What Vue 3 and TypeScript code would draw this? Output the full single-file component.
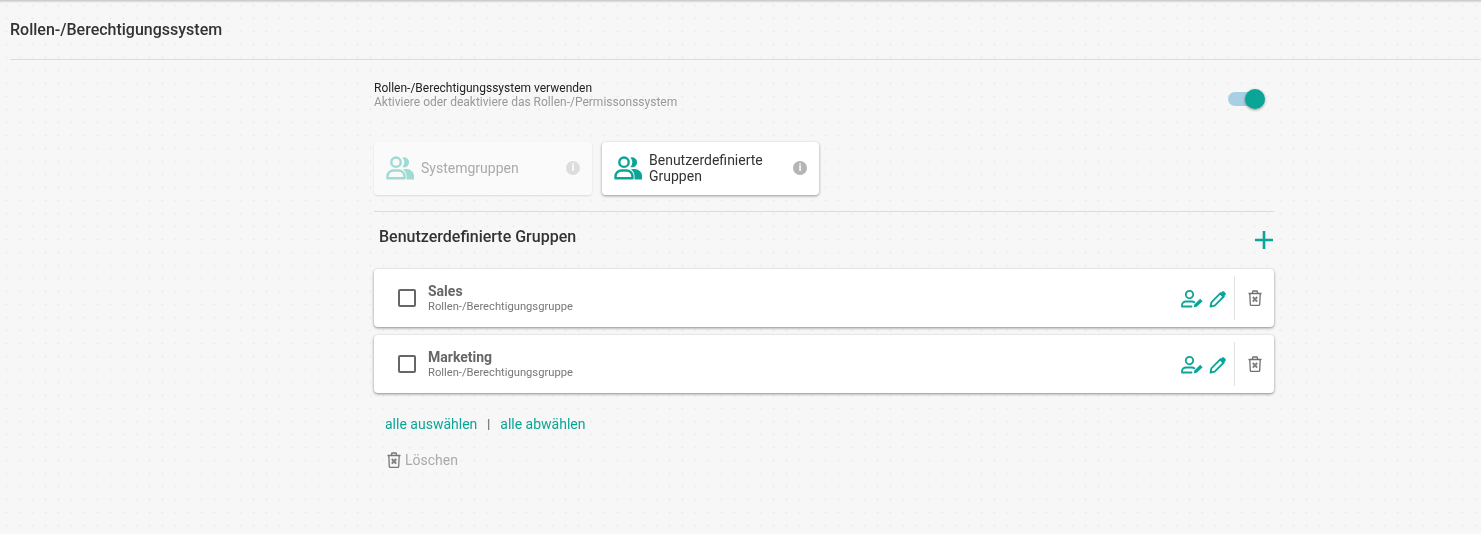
<template>
  <div class="page">
    <header class="kopf">
      <h1>Rollen-/Berechtigungssystem</h1>
    </header>

    <main class="inhalt">
      <section class="schalter-zeile">
        <div>
          <div class="schalter-titel">Rollen-/Berechtigungssystem verwenden</div>
          <div class="schalter-text">Aktiviere oder deaktiviere das Rollen-/Permissonssystem</div>
        </div>
        <div class="toggle"><span class="thumb"></span></div>
      </section>

      <div class="tabs">
        <div v-for="tab in tabs" :key="tab.label" class="tab" :class="{ aktiv: tab.aktiv }">
          <svg class="tab-icon" viewBox="0 0 28 24" fill="none">
            <circle cx="10" cy="6.200" r="4.700" stroke="currentColor" stroke-width="2.400" />
            <path d="M16.400 1.600a5 5 0 1 1 0 9.400a7.400 7.400 0 0 0 0-9.400z" fill="currentColor" />
            <path d="M1.500 22.300v-1.800c0-3.600 2.800-6 6-6h5c3.200 0 6 2.400 6 6v1.800z" stroke="currentColor" stroke-width="2.400" stroke-linejoin="round" />
            <path d="M17 13h3.500c4 0 7.500 3 7.500 6.500v4h-7.500v-3.500c0-2.700-1.500-5-3.500-7z" fill="currentColor" />
          </svg>
          <span class="tab-label">{{ tab.label }}</span>
          <span class="info">i</span>
        </div>
      </div>

      <div class="titel-zeile">
        <h2>Benutzerdefinierte Gruppen</h2>
        <svg class="plus" viewBox="0 0 18 18"><path d="M9 0v18M0 9h18" stroke="#0aa596" stroke-width="2.600" /></svg>
      </div>

      <div class="liste">
        <div v-for="gruppe in gruppen" :key="gruppe" class="karte">
          <span class="checkbox"></span>
          <div class="karte-text">
            <div class="karte-name">{{ gruppe }}</div>
            <div class="karte-typ">Rollen-/Berechtigungsgruppe</div>
          </div>
          <div class="aktionen">
            <svg class="icon-user" viewBox="0 0 22 18" fill="none" stroke="#0aa596" stroke-width="1.800">
              <circle cx="8.500" cy="4.600" r="3.700" />
              <path d="M1 16.500v-1.200c0-2.400 2-3.800 4-3.800h6c1 0 1.800.3 2.400.7M1 16.500h9.500" stroke-linecap="round" />
              <path d="M12.800 17.200l.6-2.700l5.800-5.700l2.400 2.400l-5.800 5.500z" fill="#0aa596" stroke="none" />
            </svg>
            <svg class="icon-stift" viewBox="0 0 18 18" fill="none">
              <path d="M1.500 16.500l.9-4.200L11.500 3.200l3.300 3.300l-9.100 9.100z" stroke="#0aa596" stroke-width="1.800" stroke-linejoin="round" />
              <path d="M10.500 4.200l2.700-2.700c.5-.5 1.300-.5 1.800 0l1.500 1.500c.5.500.5 1.300 0 1.800l-2.700 2.700z" fill="#0aa596" />
            </svg>
          </div>
          <div class="trenner"></div>
          <svg class="icon-tonne" viewBox="0 0 14 16" fill="none">
            <path d="M.5 3.500h13M4.300 3.200L5 1h4l.7 2.200" stroke="#707070" stroke-width="1.300" />
            <path d="M1.800 3.500l.5 10.900c0 .6.400 .9 1 .9h7.400c.6 0 1-.3 1-.9l.5-10.900" stroke="#707070" stroke-width="1.300" />
            <path d="M4.800 7l4.400 4.600M9.200 7l-4.400 4.600" stroke="#808080" stroke-width="2" />
          </svg>
        </div>
      </div>

      <div class="auswahl">
        <a>alle auswählen</a>
        <span class="strich">|</span>
        <a>alle abwählen</a>
      </div>

      <div class="loeschen">
        <svg class="icon-tonne" viewBox="0 0 14 16" fill="none">
          <path d="M.5 3.500h13M4.300 3.200L5 1h4l.7 2.200" stroke="#777" stroke-width="1.300" />
          <path d="M1.800 3.500l.5 10.900c0 .6.400 .9 1 .9h7.400c.6 0 1-.3 1-.9l.5-10.900" stroke="#777" stroke-width="1.300" />
          <path d="M4.800 7l4.400 4.600M9.200 7l-4.400 4.600" stroke="#808080" stroke-width="2" />
        </svg>
        <span>Löschen</span>
      </div>
    </main>
  </div>
</template>

<script setup lang="ts">
interface Tab {
  label: string;
  aktiv: boolean;
}

const tabs: Tab[] = [
  { label: 'Systemgruppen', aktiv: false },
  { label: 'Benutzerdefinierte Gruppen', aktiv: true }
];

const gruppen: string[] = ['Sales', 'Marketing'];
</script>

<style>
body {
  margin: 0;
}
</style>

<style scoped>
.page {
  height: 534px;
  overflow: hidden;
  box-sizing: border-box;
  padding: 0 0 0 10px;
  font-family: Roboto, "Liberation Sans", sans-serif;
  color: #333;
  background-color: #f7f7f7;
  background-image: linear-gradient(#c4c4c4, #f7f7f7), radial-gradient(circle, #efefef 1px, transparent 1.3px);
  background-size: 100% 3px, 13px 13px;
  background-position: 0 0, 0 -1px;
  background-repeat: no-repeat, repeat;
}

/* eigene Ebene, damit der Text graustufig geglaettet wird */
.kopf,
.inhalt {
  will-change: transform;
}

.kopf {
  height: 59px;
  border-bottom: 1px solid #dcdcdc;
}

.kopf h1 {
  margin: 0;
  padding-top: 20px;
  font-size: 16px;
  line-height: 20px;
  font-weight: 500;
  color: #333;
}

.inhalt {
  width: 900px;
  margin-left: 364px;
}

.schalter-zeile {
  display: flex;
  justify-content: space-between;
  padding-top: 21px;
  height: 61px;
}

.schalter-titel {
  font-size: 12px;
  line-height: 14px;
  color: #222;
}

.schalter-text {
  font-size: 12px;
  line-height: 15px;
  color: #999;
}

.toggle {
  position: relative;
  width: 30px;
  height: 14px;
  margin: 11px 16px 0 0;
  border-radius: 7px;
  background: #a8d0e4;
}

.thumb {
  position: absolute;
  left: 17px;
  top: -3px;
  width: 20px;
  height: 20px;
  border-radius: 50%;
  background: #0aa596;
  box-shadow: 0 1px 3px rgba(0, 0, 0, 0.4);
}

.tabs {
  display: flex;
  gap: 10px;
  height: 69px;
  border-bottom: 1px solid #dcdcdc;
}

.tab {
  display: flex;
  align-items: center;
  box-sizing: border-box;
  width: 218px;
  height: 53px;
  padding: 0 12px 1px;
  border-radius: 4px;
  font-size: 14px;
  line-height: 16px;
  background: #fafafa;
  color: #aaa;
  box-shadow: 0 1px 2px rgba(0, 0, 0, 0.12);
}

.tab.aktiv {
  width: 217px;
  background: #fff;
  color: #333;
  box-shadow: 0 1px 3px rgba(0, 0, 0, 0.4);
}

.tab-icon {
  flex: none;
  width: 28px;
  height: 24px;
  margin-right: 7px;
  color: #9fdad3;
}

.aktiv .tab-icon {
  color: #0aa596;
}

.tab-label {
  flex: 1;
}

.info {
  flex: none;
  width: 14px;
  height: 14px;
  border-radius: 50%;
  background: #ddd;
  color: #fff;
  font-size: 10px;
  line-height: 14px;
  font-weight: 700;
  text-align: center;
}

.aktiv .info {
  background: #b5b5b5;
}

.titel-zeile {
  display: flex;
  justify-content: space-between;
  height: 57px;
  padding-left: 5px;
}

.titel-zeile h2 {
  margin: 0;
  padding-top: 15px;
  font-size: 16px;
  line-height: 19px;
  font-weight: 500;
  color: #333;
}

.plus {
  width: 18px;
  height: 18px;
  margin: 19px 1px 0 0;
}

.liste {
  display: flex;
  flex-direction: column;
  gap: 8px;
}

.karte {
  display: flex;
  align-items: center;
  height: 58px;
  box-sizing: border-box;
  padding-left: 24px;
  border-radius: 4px;
  background: #fff;
  box-shadow: 0 1px 3px rgba(0, 0, 0, 0.45);
}

.checkbox {
  flex: none;
  box-sizing: border-box;
  width: 18px;
  height: 18px;
  margin-right: 12px;
  border: 2px solid #666;
  border-radius: 2px;
}

.karte-text {
  flex: 1;
}

.karte-name {
  font-size: 14px;
  line-height: 16px;
  font-weight: 700;
  color: #666;
}

.karte-typ {
  font-size: 11.200px;
  line-height: 14px;
  margin-top: 1px;
  color: #777;
}

.aktionen {
  display: flex;
  align-items: center;
  gap: 6px;
  margin-top: 1px;
}

.icon-user {
  width: 22px;
  height: 18px;
}

.icon-stift {
  width: 18px;
  height: 18px;
}

.trenner {
  width: 1px;
  height: 44px;
  margin: 0 13px 0 7px;
  background: #e2e2e2;
}

.icon-tonne {
  flex: none;
  width: 14px;
  height: 16px;
}

.karte .icon-tonne {
  margin-right: 12px;
}

.auswahl {
  display: flex;
  padding: 23px 0 0 11px;
  font-size: 14px;
  line-height: 16px;
}

.auswahl a {
  color: #0aa596;
}

.strich {
  margin: 0 10px;
  color: #555;
  font-size: 12px;
  font-weight: 500;
}

.loeschen {
  display: flex;
  align-items: center;
  gap: 4px;
  padding: 20px 0 0 13px;
  font-size: 14px;
  line-height: 16px;
  color: #aaa;
}
</style>
